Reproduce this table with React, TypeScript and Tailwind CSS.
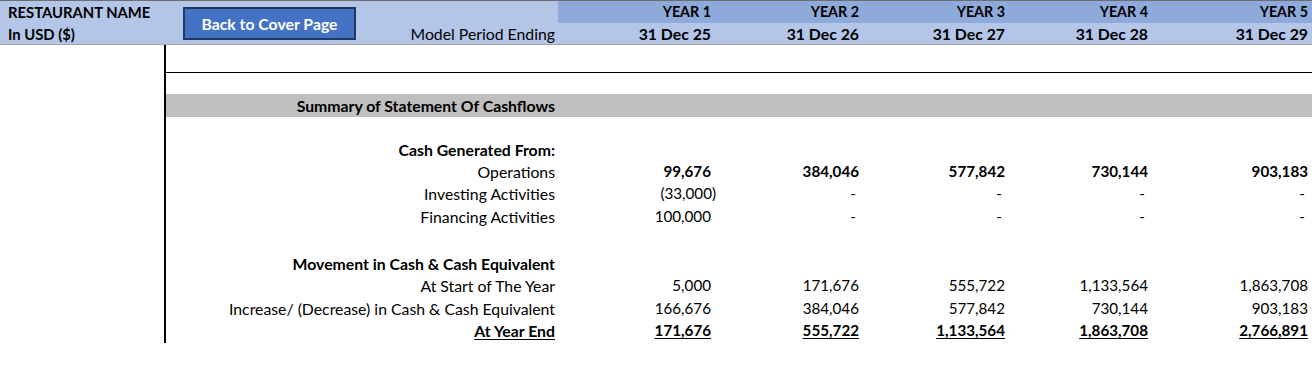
import React from 'react';

type Cell = { v: string; neg?: boolean };

const years = [
  { label: 'YEAR 1', date: '31 Dec 25' },
  { label: 'YEAR 2', date: '31 Dec 26' },
  { label: 'YEAR 3', date: '31 Dec 27' },
  { label: 'YEAR 4', date: '31 Dec 28' },
  { label: 'YEAR 5', date: '31 Dec 29' },
];

// column widths after the label column, last one is the cut-off column
const colW = ['w-[161px]', 'w-[148px]', 'w-[146px]', 'w-[143px]', 'w-[156px]'];
const colPad = ['pr-2', 'pr-2', 'pr-2', 'pr-2', 'pr-1'];

const NumCell: React.FC<{ cell: Cell; i: number; bold?: boolean; under?: boolean }> = ({ cell, i, bold, under }) => {
  const isDash = cell.v === '-';
  return (
    <div className={`${colW[i]} ${colPad[i]} shrink-0 flex items-center justify-end pt-[1px] text-[15.2px]`}>
      <span
        className={`${bold ? 'font-bold' : ''} ${under ? 'underline underline-offset-2' : ''} ${
          cell.neg ? 'mr-[-5px]' : ''
        } ${isDash ? 'mr-[3px]' : ''}`}
      >
        {cell.v}
      </span>
    </div>
  );
};

const Row: React.FC<{
  h: string;
  label?: string;
  bold?: boolean;
  numBold?: boolean;
  under?: boolean;
  cells?: Cell[];
  className?: string;
}> = ({ h, label, bold, numBold, under, cells, className = '' }) => (
  <div className={`flex ${h} ${className}`}>
    <div className="w-[392px] shrink-0 flex items-center justify-end pr-[3px] pt-[1px]">
      {label && (
        <span className={`${bold ? 'font-bold' : ''} ${under ? 'underline underline-offset-2' : ''}`}>{label}</span>
      )}
    </div>
    {cells && cells.map((c, i) => <NumCell key={i} cell={c} i={i} bold={bold || numBold} under={under} />)}
  </div>
);

const c = (...vals: string[]): Cell[] => vals.map((v) => ({ v, neg: v.startsWith('(') }));

export default function App() {
  return (
    <div
      className="w-[1312px] h-[375px] overflow-hidden bg-white text-black text-[15.8px] leading-none"
      style={{ fontFamily: 'Lato, "Liberation Sans", sans-serif' }}
    >
      {/* Header */}
      <div className="flex h-[45px] bg-[#b4c6e7] border-t border-[#6e6e6e] border-b border-b-[#a6a6a6]">
        <div className="w-[165px] shrink-0 flex flex-col font-bold pl-2 text-[14.8px]">
          <div className="h-[22px] flex items-center">RESTAURANT NAME</div>
          <div className="h-[21px] flex items-center pt-[1px]">In USD ($)</div>
        </div>
        <div className="w-[393px] shrink-0 flex justify-between pr-[3px]">
          <button className="self-center mt-[1px] ml-[18px] w-[173px] h-[33px] pt-[1px] bg-[#4472c4] border-2 border-[#1f3864] text-white font-bold text-[15.8px]">
            Back to Cover Page
          </button>
          <div className="self-end h-[21px] flex items-center pt-[1px]">Model Period Ending</div>
        </div>
        {years.map((y, i) => (
          <div key={i} className={`${colW[i]} ${colPad[i]} shrink-0 flex flex-col font-bold`}>
            <div className="h-[22px] -mr-2 pr-2 bg-[#8eaadb] flex items-center justify-end pt-[1px] text-[14.3px]">
              {y.label}
            </div>
            <div className="h-[21px] flex items-center justify-end pt-[1px] text-[15.8px]">{y.date}</div>
          </div>
        ))}
      </div>

      {/* Body */}
      <div className="flex">
        <div className="w-[166px] h-[298px] shrink-0 border-r-2 border-black" />
        <div className="flex-1 flex flex-col">
          <div className="h-[28px] border-b border-black" />
          <div className="h-[21px]" />
          <Row h="h-[23px]" className="bg-[#bfbfbf]" label="Summary of Statement Of Cashflows" bold />
          <div className="h-[21px]" />
          <Row h="h-[22px]" label="Cash Generated From:" bold />
          <Row h="h-[22px]" label="Operations" numBold cells={c('99,676', '384,046', '577,842', '730,144', '903,183')} />
          <Row h="h-[23px]" label="Investing Activities" cells={c('(33,000)', '-', '-', '-', '-')} />
          <Row h="h-[22px]" label="Financing Activities" cells={c('100,000', '-', '-', '-', '-')} />
          <div className="h-[25px]" />
          <Row h="h-[22px]" label="Movement in Cash & Cash Equivalent" bold />
          <Row h="h-[23px]" label="At Start of The Year" cells={c('5,000', '171,676', '555,722', '1,133,564', '1,863,708')} />
          <Row
            h="h-[22px]"
            label="Increase/ (Decrease) in Cash & Cash Equivalent"
            cells={c('166,676', '384,046', '577,842', '730,144', '903,183')}
          />
          <Row
            h="h-[23px]"
            label="At Year End"
            bold
            under
            cells={c('171,676', '555,722', '1,133,564', '1,863,708', '2,766,891')}
          />
        </div>
      </div>
    </div>
  );
}
